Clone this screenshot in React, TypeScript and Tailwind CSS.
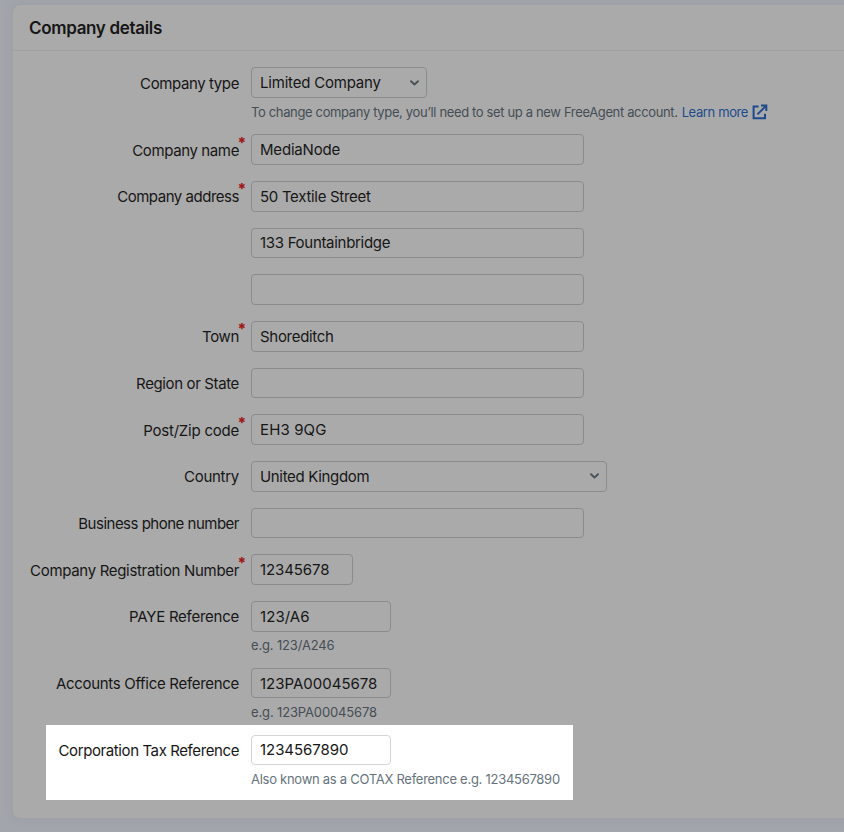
import React from 'react';

type Row = {
  label?: string;
  spacing?: string;
  required?: boolean;
  value?: string;
  valueSpacing?: string;
  width: string;
  select?: boolean;
  help?: React.ReactNode;
};

const Chevron = () => (
  <svg width="11" height="8" viewBox="0 0 11 8" fill="none" stroke="#4b5359" strokeWidth="2" strokeLinecap="round" strokeLinejoin="round">
    <path d="M2 2.2 L5.5 5.4 L9 2.2" />
  </svg>
);

const External = () => (
  <svg className="ml-[4px] shrink-0" width="16" height="16" viewBox="0 0 16 16" fill="none" stroke="#1d4a8c" strokeWidth="2">
    <path d="M6.6 2.5 H1.6 V14.2 H13 V9.8" />
    <path d="M5.4 10.4 L13.4 2.4" />
    <path d="M9 1.6 H14.3 V6.9" />
  </svg>
);

const rows: Row[] = [
  {
    label: 'Company type', spacing: 'tracking-[-0.4px]', value: 'Limited Company', valueSpacing: 'tracking-[-0.2px]', width: 'w-[176px]', select: true,
    help: (
      <>
        <span className="tracking-[-0.355px]">To change company type, you’ll need to set up a new FreeAgent account.</span>
        <a className="ml-[4px] flex items-center text-[#1d4a8c]"><span className="tracking-[-0.38px]">Learn more</span><External /></a>
      </>
    ),
  },
  { label: 'Company name', spacing: 'tracking-[-0.38px]', required: true, value: 'MediaNode', valueSpacing: 'tracking-[-0.2px]', width: 'w-[333px]' },
  { label: 'Company address', spacing: 'tracking-[-0.47px]', required: true, value: '50 Textile Street', valueSpacing: 'tracking-[-0.3px]', width: 'w-[333px]' },
  { value: '133 Fountainbridge', valueSpacing: 'tracking-[-0.3px]', width: 'w-[333px]' },
  { width: 'w-[333px]' },
  { label: 'Town', spacing: 'tracking-[-0.35px]', required: true, value: 'Shoreditch', valueSpacing: 'tracking-[-0.3px]', width: 'w-[333px]' },
  { label: 'Region or State', spacing: 'tracking-[-0.37px]', width: 'w-[333px]' },
  { label: 'Post/Zip code', spacing: 'tracking-[-0.23px]', required: true, value: 'EH3 9QG', valueSpacing: 'tracking-[0.12px]', width: 'w-[333px]' },
  { label: 'Country', spacing: 'tracking-[-0.28px]', value: 'United Kingdom', valueSpacing: 'tracking-[-0.33px]', width: 'w-[356px]', select: true },
  { label: 'Business phone number', spacing: 'tracking-[-0.5px]', width: 'w-[333px]' },
  { label: 'Company Registration Number', spacing: 'tracking-[-0.32px]', required: true, value: '12345678', valueSpacing: 'tracking-[-0.1px]', width: 'w-[102px]' },
  { label: 'PAYE Reference', spacing: 'tracking-[-0.25px]', value: '123/A6', valueSpacing: 'tracking-[0.08px]', width: 'w-[140px]', help: <span className="tracking-[-0.15px]">e.g. 123/A246</span> },
  { label: 'Accounts Office Reference', spacing: 'tracking-[-0.3px]', value: '123PA00045678', width: 'w-[140px]', help: <span className="tracking-[-0.14px]">e.g. 123PA00045678</span> },
];

function Field({ row, bright }: { row: Row; bright?: boolean }) {
  return (
    <div className="flex items-start">
      <div className={`flex h-[30px] shrink-0 items-center justify-end whitespace-nowrap pt-[3.4px] text-[15px] text-[#161616] ${bright ? 'w-[193px]' : 'w-[226px]'}`}>
        <span className={`relative ${row.spacing ?? ''}`}>
          {row.label}
          {row.required && <span className="absolute left-full top-[-6px] -ml-[1.5px] text-[15px] font-extrabold leading-[18px] tracking-normal text-[#a01818]">*</span>}
        </span>
      </div>
      <div className="ml-[12px]">
        <div className={`flex h-[30.67px] items-center justify-between rounded-[4px] border pl-[8px] pr-[6px] text-[15px] text-[#161616] ${bright ? 'border-[#d3d5d8]' : 'border-[#898c8f]'} ${row.width}`}>
          <span className={`whitespace-nowrap pt-[1.4px] ${row.valueSpacing ?? ''}`}>{row.value}</span>
          {row.select && <Chevron />}
        </div>
        {row.help && (
          <div className={`mt-[6.33px] flex h-[14px] items-center whitespace-nowrap pt-[2px] text-[13px] ${bright ? 'text-[#66737d]' : 'text-[#454e55]'}`}>{row.help}</div>
        )}
      </div>
    </div>
  );
}

export default function App() {
  return (
    <div className="h-[832px] w-[844px] overflow-hidden bg-[#a2a5ab] pl-[12px] pt-[4px] font-['Inter','Liberation_Sans',sans-serif]">
      <main className="h-[815px] w-[860px] rounded-[8px] border border-[#9da2a8] bg-[#aaaaaa] shadow-[0_0_8px_rgba(130,142,158,0.22)]">
        <header className="flex h-[46px] items-center border-b border-[#9fa2a5] pl-[16px] pt-[2px]">
          <h1 className="text-[17px] font-semibold tracking-[-0.33px] text-[#161616]">Company details</h1>
        </header>
        <div className="flex flex-col gap-[16px] pt-[16.3px]">
          {rows.map((row, i) => <Field key={i} row={row} />)}
        </div>
        <section className="ml-[33px] mt-[5.7px] h-[75px] w-[527px] bg-white pt-[10px]">
          <Field
            bright
            row={{ label: 'Corporation Tax Reference', spacing: 'tracking-[-0.4px]', value: '1234567890', valueSpacing: 'tracking-[-0.05px]', width: 'w-[140px]', help: <span className="tracking-[-0.27px]">Also known as a COTAX Reference e.g. 1234567890</span> }}
          />
        </section>
      </main>
    </div>
  );
}
